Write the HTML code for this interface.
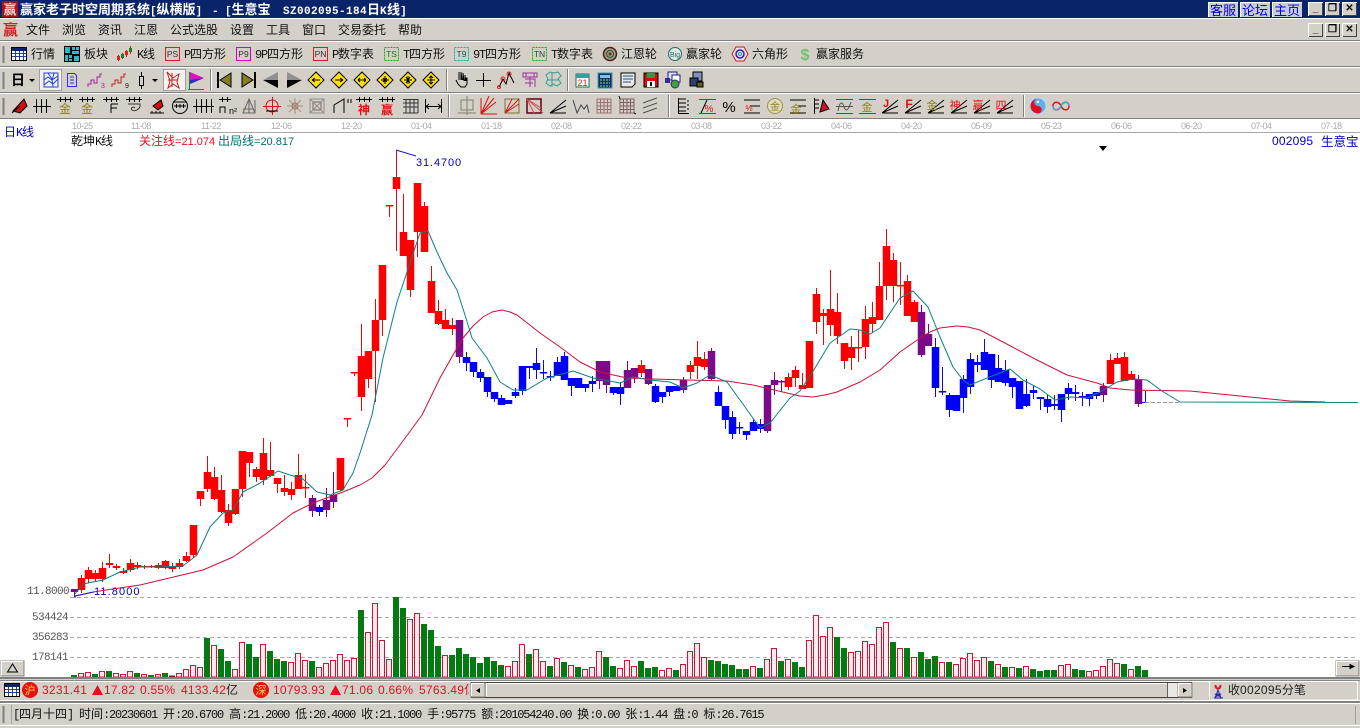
<!DOCTYPE html>
<html lang="zh"><head><meta charset="utf-8"><title>赢家老子时空周期系统</title>
<style>
html,body{margin:0;padding:0;width:1360px;height:728px;overflow:hidden;background:#d4d0c8}
body{position:relative;font:12px/14px "Noto Sans CJK SC","WenQuanYi Zen Hei",sans-serif;color:#111}
.a{position:absolute;white-space:pre}
i{font:normal 11px/14px "Liberation Mono",monospace;letter-spacing:-.6px}
.st i{font:normal 12px/14px "Liberation Mono",monospace;letter-spacing:-1.2px}
.l{position:absolute;left:0;width:1360px;height:1px}
.g{background:#808080}.w{background:#fff}
.tb{color:#fff;font:bold 13px/18px "Noto Sans CJK SC",sans-serif;top:0}
.tb i{font:bold 11px/18px "Liberation Mono",monospace;letter-spacing:-.1px}
.m{top:23px}.t1{top:47px}
.wb{position:absolute;width:15px;height:14px;background:#d4d0c8;box-shadow:inset 1px 1px #fff,inset -1px -1px #404040;font:bold 10px/14px "Liberation Sans",sans-serif;text-align:center;color:#000}
.lk{position:absolute;top:2px;height:15px;width:30px;background:#c8ccd8;color:#0000d0;font:13px/15px "Noto Sans CJK SC",sans-serif;text-align:center;box-shadow:inset 1px 1px #fff}
.d{top:120px;color:#aaa;font:9px/12px "Liberation Sans",sans-serif;letter-spacing:-.5px}
.s{top:683px;color:#e01020;font:12px/14px "Liberation Sans","Noto Sans CJK SC",sans-serif;letter-spacing:.25px}
.y{color:#555;font:11px/12px "Liberation Mono",monospace;letter-spacing:-.6px;width:60px;text-align:right;left:8px}
.n{font:11px "Liberation Sans",sans-serif}
svg{position:absolute;left:0;top:0}
</style></head><body>

<div class="a" style="left:0;top:0;width:1360px;height:18px;background:#0a246a"></div>
<div class="l w" style="top:18px"></div>
<div class="l g" style="top:40px"></div><div class="l w" style="top:41px"></div>
<div class="l g" style="top:66px"></div><div class="l w" style="top:67px"></div>
<div class="l g" style="top:92px"></div><div class="l w" style="top:93px"></div>
<div class="l g" style="top:118px"></div>

<!-- title -->
<div class="a" style="left:2px;top:1px;width:16px;height:16px;background:#a01818;color:#ffd0d0;font:bold 13px/16px 'Noto Sans CJK SC',sans-serif;text-align:center">赢</div>
<div class="a tb" style="left:20px">赢家老子时空周期系统<i>[</i>纵横版<i>]</i></div>
<div class="a tb" style="left:212px"><i>-</i></div>
<div class="a tb" style="left:225px"><i>[</i>生意宝</div>
<div class="a tb" style="left:283px"><i style="letter-spacing:.4px">SZ002095-184</i>日<i style="letter-spacing:.4px">K</i>线<i>]</i></div>
<div class="lk" style="left:1208px">客服</div><div class="lk" style="left:1240px">论坛</div><div class="lk" style="left:1272px">主页</div>
<div class="wb" style="left:1308px;top:2px">_</div><div class="wb" style="left:1325px;top:2px">❐</div><div class="wb" style="left:1342px;top:2px">✕</div>
<div class="wb" style="left:1308px;top:23px">_</div><div class="wb" style="left:1325px;top:23px">❐</div><div class="wb" style="left:1342px;top:23px">✕</div>

<!-- menu -->
<div class="a" style="left:3px;top:21px;color:#d02020;font:bold 15px/18px 'Noto Sans CJK SC',sans-serif">赢</div>
<div class="a m" style="left:26px">文件</div><div class="a m" style="left:62px">浏览</div><div class="a m" style="left:98px">资讯</div><div class="a m" style="left:134px">江恩</div><div class="a m" style="left:170px">公式选股</div><div class="a m" style="left:230px">设置</div><div class="a m" style="left:266px">工具</div><div class="a m" style="left:302px">窗口</div><div class="a m" style="left:338px">交易委托</div><div class="a m" style="left:398px">帮助</div>

<!-- toolbar1 text -->
<div class="a t1 st" style="left:31px">行情</div><div class="a t1 st" style="left:84px">板块</div><div class="a t1 st" style="left:137px"><i>K</i>线</div><div class="a t1 st" style="left:184px"><i>P</i>四方形</div><div class="a t1 st" style="left:255px"><i>9P</i>四方形</div><div class="a t1 st" style="left:332px"><i>P</i>数字表</div><div class="a t1 st" style="left:403px"><i>T</i>四方形</div><div class="a t1 st" style="left:473px"><i>9T</i>四方形</div><div class="a t1 st" style="left:551px"><i>T</i>数字表</div><div class="a t1" style="left:621px">江恩轮</div><div class="a t1" style="left:686px">赢家轮</div><div class="a t1" style="left:752px">六角形</div><div class="a t1" style="left:816px">赢家服务</div>

<!-- chart area -->
<div class="a" style="left:0;top:119px;width:1360px;height:558px;background:#fff"></div>
<div class="a" style="left:71px;top:132px;width:1289px;height:1px;background:#a8a8a8"></div>
<div class="a d" style="left:72px">10-25</div><div class="a d" style="left:131px">11-08</div><div class="a d" style="left:201px">11-22</div><div class="a d" style="left:271px">12-06</div><div class="a d" style="left:341px">12-20</div><div class="a d" style="left:411px">01-04</div><div class="a d" style="left:481px">01-18</div><div class="a d" style="left:551px">02-08</div><div class="a d" style="left:621px">02-22</div><div class="a d" style="left:691px">03-08</div><div class="a d" style="left:761px">03-22</div><div class="a d" style="left:831px">04-06</div><div class="a d" style="left:901px">04-20</div><div class="a d" style="left:971px">05-09</div><div class="a d" style="left:1041px">05-23</div><div class="a d" style="left:1111px">06-06</div><div class="a d" style="left:1181px">06-20</div><div class="a d" style="left:1251px">07-04</div><div class="a d" style="left:1321px">07-18</div>

<div class="a st" style="left:4px;top:125px;color:#0000c8">日<i>K</i>线</div>
<div class="a st" style="left:71px;top:134px">乾坤<i>K</i>线</div>
<div class="a" style="left:139px;top:134px;color:#e01020;font-size:12px">关注线<span class="n">=21.074</span></div>
<div class="a" style="left:218px;top:134px;color:#007070">出局线<span class="n">=20.817</span></div>
<div class="a" style="left:1272px;top:134px;color:#0000c8;font:12px/14px 'Liberation Sans';letter-spacing:.2px">002095</div>
<div class="a" style="left:1321px;top:134px;color:#0000c8;font-size:12.5px">生意宝</div>

<div class="a" style="left:416px;top:156px;color:#0000c8;font:11px/14px 'Liberation Sans';letter-spacing:.9px">31.4700</div>
<div class="a" style="left:94px;top:585px;color:#0000c8;font:11px/14px 'Liberation Sans';letter-spacing:1.1px">11.8000</div>
<div class="a y" style="top:586px;left:8px;text-align:right;width:61px">11.8000</div>
<div class="a y" style="top:612px">534424</div><div class="a y" style="top:632px">356283</div><div class="a y" style="top:652px">178141</div>

<svg width="1360" height="728" viewBox="0 0 1360 728">
<path d="M70 597.5H1358M70 617.5H1358M70 637.5H1358M70 657.5H1358" stroke="#a8a8a8" stroke-dasharray="4 3" fill="none"/>
<path d="M1099 146h8l-4 5z" fill="#000"/>
<!-- volume green -->
<path fill="none" stroke="#067a12" stroke-width="6" d="M74 675V677M95 674V677M109 671V677M137 673V677M151 675V677M165 673V677M207 638V677M221 649V677M228 661V677M249 644V677M256 657V677M270 651V677M277 659V677M284 661V677M312 661V677M361 610V677M396 597V677M403 608V677M424 624V677M431 630V677M438 646V677M452 655V677M459 648V677M466 654V677M473 657V677M480 663V677M487 657V677M494 661V677M501 665V677M529 654V677M550 666V677M564 662V677M578 667V677M606 657V677M613 666V677M641 661V677M648 668V677M655 667V677M676 670V677M711 660V677M718 661V677M725 664V677M732 665V677M739 669V677M746 669V677M760 668V677M781 661V677M795 662V677M802 667V677M837 637V677M844 648V677M893 642V677M907 648V677M921 652V677M928 659V677M935 656V677M949 662V677M991 661V677M1005 667V677M1019 668V677M1033 669V677M1040 671V677M1047 670V677M1054 670V677M1075 669V677M1082 670V677M1124 664V677M1138 666V677M1145 670V677"/>
<!-- volume red -->
<path fill="#ffeaee" stroke="#cc1636" d="M78.5 673.5h5V677h-5zM85.5 672.5h5V677h-5zM99.5 671.5h5V677h-5zM113.5 673.5h5V677h-5zM120.5 674.5h5V677h-5zM127.5 671.5h5V677h-5zM141.5 674.5h5V677h-5zM155.5 674.5h5V677h-5zM176.5 673.5h5V677h-5zM183.5 669.5h5V677h-5zM190.5 665.5h5V677h-5zM197.5 667.5h5V677h-5zM211.5 645.5h5V677h-5zM232.5 669.5h5V677h-5zM239.5 642.5h5V677h-5zM260.5 644.5h5V677h-5zM288.5 662.5h5V677h-5zM295.5 653.5h5V677h-5zM302.5 660.5h5V677h-5zM316.5 667.5h5V677h-5zM323.5 663.5h5V677h-5zM330.5 660.5h5V677h-5zM337.5 654.5h5V677h-5zM344.5 660.5h5V677h-5zM351.5 658.5h5V677h-5zM365.5 632.5h5V677h-5zM372.5 603.5h5V677h-5zM379.5 640.5h5V677h-5zM386.5 659.5h5V677h-5zM407.5 619.5h5V677h-5zM414.5 613.5h5V677h-5zM442.5 655.5h5V677h-5zM505.5 666.5h5V677h-5zM512.5 661.5h5V677h-5zM519.5 644.5h5V677h-5zM533.5 649.5h5V677h-5zM540.5 661.5h5V677h-5zM554.5 658.5h5V677h-5zM568.5 665.5h5V677h-5zM582.5 669.5h5V677h-5zM589.5 667.5h5V677h-5zM596.5 651.5h5V677h-5zM617.5 668.5h5V677h-5zM624.5 660.5h5V677h-5zM631.5 666.5h5V677h-5zM659.5 670.5h5V677h-5zM666.5 668.5h5V677h-5zM680.5 664.5h5V677h-5zM687.5 651.5h5V677h-5zM694.5 643.5h5V677h-5zM701.5 657.5h5V677h-5zM750.5 666.5h5V677h-5zM764.5 659.5h5V677h-5zM771.5 648.5h5V677h-5zM785.5 659.5h5V677h-5zM806.5 640.5h5V677h-5zM813.5 615.5h5V677h-5zM820.5 636.5h5V677h-5zM827.5 627.5h5V677h-5zM848.5 652.5h5V677h-5zM855.5 651.5h5V677h-5zM862.5 641.5h5V677h-5zM869.5 644.5h5V677h-5zM876.5 627.5h5V677h-5zM883.5 622.5h5V677h-5zM897.5 648.5h5V677h-5zM911.5 657.5h5V677h-5zM939.5 662.5h5V677h-5zM953.5 664.5h5V677h-5zM960.5 658.5h5V677h-5zM967.5 653.5h5V677h-5zM974.5 660.5h5V677h-5zM981.5 657.5h5V677h-5zM995.5 664.5h5V677h-5zM1009.5 667.5h5V677h-5zM1023.5 666.5h5V677h-5zM1058.5 665.5h5V677h-5zM1065.5 664.5h5V677h-5zM1086.5 671.5h5V677h-5zM1093.5 670.5h5V677h-5zM1100.5 666.5h5V677h-5zM1107.5 659.5h5V677h-5zM1114.5 663.5h5V677h-5zM1128.5 669.5h5V677h-5z"/>
<path stroke="#a00020" stroke-width="6" d="M172 675.5V677"/>

<g transform="translate(.5 0)" fill="none">
<!-- wicks -->
<path stroke="#e80808" d="M81 575V593M88 567V583M95 570V582M102 562V582M109 554V568M116 564V570M123 568V574M130 559V572M137 562V569M144 565V569M151 565V568M158 563V569M165 560V569M172 563V572M179 559V569M186 552V562M193 525V558M200 491V506M207 456V492M214 467V500M221 475V513M228 504V526M235 489V515M242 451V497M249 452V477M256 467V482M263 438V485M270 442V477M277 478V493M284 475V496M291 482V500M298 454V489M305 474V498M340 458V491M347 418V427M354 372V376M361 324V411M368 351V388M375 299V402M382 265V336M389 205V217M396 150V251M403 194V256M410 240V297M417 183V257M424 202V252M431 266V313M438 300V325M445 309V329M452 318V335M641 360V377M690 361V379M697 341V379M704 352V370M788 373V390M795 366V387M802 373V389M809 341V388M816 288V334M823 309V345M830 270V336M837 293V344M844 343V369M851 336V370M858 330V362M865 306V359M872 302V333M879 262V320M886 229V300M893 253V302M900 262V305M907 275V316M914 300V322M1110 354V384M1117 353V364M1124 352V381M1131 371V380"/>
<path stroke="#800080" d="M74 589V597M312 495V517M326 488V517M333 472V508M459 320V363M599 361V389M606 361V393M627 361V388M634 368V383M648 369V385M683 377V393M711 348V380M767 385V433M774 372V395M781 380V392M921 305V357M928 324V346M1103 383V402M1138 375V407"/>
<path stroke="#0808f0" d="M319 505V516M466 352V371M473 362V377M480 369V382M487 377V397M494 392V402M501 395V405M515 388V398M522 366V395M529 366V379M536 348V379M543 360V379M550 371V381M557 357V376M564 352V380M571 378V396M585 384V392M592 376V392M613 387V395M620 382V405M655 384V403M662 392V403M669 386V396M718 386V406M725 406V429M732 411V439M739 422V434M746 431V440M753 419V431M760 419V433M935 338V397M942 367V395M949 393V417M963 375V413M970 353V394M977 355V372M984 339V370M991 354V388M998 355V382M1005 360V386M1012 378V398M1026 379V407M1033 385V399M1040 397V410M1047 395V413M1054 395V410M1061 394V422M1068 383V400M1075 385V401M1082 392V406M1089 394V406M1096 392V399M1145 391V403"/>
<!-- bodies -->
<path stroke="#fa0000" stroke-width="7.5" d="M81 578V590M88 570V579M95 573V579M102 568V579M109 563V565M116 566V568M123 571V573M130 563V570M137 565V567M144 566V567.5M151 566V567.5M158 565V568M165 561V568M172 566V569M179 563V567M186 556V561M193 525V555M200 491V499M207 472V489M214 477V499M221 490V512M228 510V523M235 489V514M242 451V489M249 452V463M256 469V477M263 453V480M270 470V476M277 478V484M284 488V492M291 489V495M298 475V489M305 487V488.5M340 458V490M347 418V419.5M354 372V373.5M361 356V397M368 351V379M375 320V351M382 265V320M389 205V206.5M396 177V189M403 232V256M410 240V290M417 183V232M424 206V252M431 281V313M438 311V324M445 320V329M452 325V329M641 365V373M690 365V372M697 357V366M704 359V367M788 377V387M795 370V378M802 385V389M809 341V388M816 294V322M823 313V316M830 309V325M837 312V336M844 343V361M851 347V358M858 347V348.5M865 319V347M872 317V324M879 286V320M886 246V286M893 260V286M900 285V286.5M907 281V316M914 302V322M1110 360V384M1117 358V364M1124 357V381M1131 374V380"/>
<path stroke="#7a0a8a" stroke-width="7.5" d="M74 589V592M312 498V511M326 500V510M333 495V502M459 320V357M599 361V381M606 361V385M627 370V388M634 368V378M648 369V384M683 380V390M711 351V379M767 385V431M774 380V385M781 381V382.5M921 312V355M928 334V346M1103 386V395M1138 379V404"/>
<path stroke="#0000f8" stroke-width="7.5" d="M319 507V512M466 357V363M473 362V372M480 372V378M487 377V392M494 392V399M501 398V405M508 400V404M515 392V396M522 366V391M529 366V368M536 363V370M543 372V373.5M550 376V377.5M557 362V376M564 356V380M571 378V386M578 378V388M585 384V388M592 381V384M613 387V393M620 387V394M655 386V402M662 392V397M669 386V392M676 386V391M718 392V406M725 406V420M732 417V434M739 427V428.5M746 431V435M753 422V431M760 424V429M935 347V388M942 391V392.5M949 395V410M956 395V411M963 379V398M970 359V387M977 362V365M984 352V370M991 354V380M998 368V382M1005 370V383M1012 378V387M1019 381V409M1026 394V406M1033 390V393M1040 397V399M1047 399V407M1054 404V406M1061 394V410M1068 388V394M1075 392V394M1082 396V397.5M1089 394V399M1096 392V396M1145 402V403"/>
</g>
<!-- MA lines -->
<path d="M1145 402.5H1180" stroke="#999" stroke-dasharray="4 2"/>
<polyline fill="none" stroke="#cc1038" stroke-linejoin="round" points="75,596 93,592 140,585 203,570 233,557 267,533 293,513 313,503 343,492 360,485 372,478 385,465 400,445 422,415 440,378 453,355 463,338 473,326 483,317 492,312 502,310 510,312 517,315 540,333 560,347 580,362 600,372 627,378 653,379 687,380 727,381 753,385 787,393 800,396 813,397 825,395 837,392 860,382 880,370 900,352 920,338 930,332 940,328 948,327 957,326 968,327 980,330 1003,342 1037,360 1067,375 1097,383 1110,388 1130,390 1190,391 1240,396 1290,401 1325,402"/>
<polyline fill="none" stroke="#0c8080" stroke-linejoin="round" points="75,594 83,584 103,580 120,572 140,567 160,567 183,566 197,555 210,527 223,513 233,510 243,492 260,483 278,471 290,475 303,479 317,492 330,495 343,490 353,473 360,453 372,415 383,358 397,302 406,275 420,233 428,231 437,252 447,273 457,290 465,315 472,338 487,358 500,382 513,390 527,390 547,378 573,371 593,378 620,383 633,377 650,380 670,382 683,388 697,383 710,375 727,382 740,400 760,428 770,423 790,398 800,391 812,373 830,343 850,329 860,330 870,334 880,328 900,298 913,291 928,307 940,337 953,367 963,380 970,385 987,378 1010,369 1023,380 1040,389 1055,400 1070,397 1087,398 1100,392 1117,382 1133,379 1147,380 1162,391 1180,402 1358,402.5"/>
<path d="M396 150L416 156M75 596L94 592M75 596V598" fill="none" stroke="#1818c8"/>

<!-- TOOLBAR 1 ICONS -->
<g fill="none">
<path d="M3.5 46V63" stroke="#808080" stroke-width="2"/><path d="M3.5 72V89M3.5 98V115" stroke="#808080" stroke-width="2"/>
<rect x="11.5" y="47.5" width="15" height="13" fill="#fff" stroke="#000"/><rect x="12" y="48" width="14" height="3" fill="#0a246a"/><path d="M12 53.5H26M12 56.5H26M15.5 51V60M19.5 51V60M23.5 51V60" stroke="#2040a0"/>
<rect x="64" y="46" width="16" height="16" fill="#000"/><path d="M65 47h5v6h-5zM72 47h3v3h-3zM76 47h3v3h-3zM72 51h7v3h-7zM65 55h3v6h-3zM69 55h3v3h-3zM74 56h5v5h-5zM69 59h3v2h-3z" fill="#20c0c8"/>
<path d="M118.5 55V61M122.5 53V59M126.5 50V57M130.5 46V54" stroke="#c02020"/><path d="M117 56h3v4h-3zM125 51h3v4h-3z" fill="#e02020"/><path d="M121 54h3v4h-3zM129 48h3v4h-3z" fill="#208020"/>
<rect x="165.5" y="47.5" width="14" height="13" stroke="#d02020"/>
<rect x="236.5" y="47.5" width="14" height="13" stroke="#d000c0"/>
<rect x="313.5" y="47.5" width="14" height="13" stroke="#d02020"/>
<rect x="384.5" y="47.5" width="14" height="13" stroke="#10b020" stroke-dasharray="2 1"/>
<rect x="454.5" y="47.5" width="14" height="13" stroke="#10b0b0" stroke-dasharray="2 1"/>
<rect x="532.5" y="47.5" width="14" height="13" stroke="#10b020" stroke-dasharray="2 1"/>
<g font-family="Liberation Sans" font-size="8.5" fill="#333" text-anchor="middle">
<text x="172.5" y="57">PS</text>
<text x="243.5" y="57">P9</text>
<text x="320.5" y="57">PN</text>
<text x="391.5" y="57" fill="#207020">TS</text>
<text x="461.5" y="57" fill="#105060">T9</text>
<text x="539.5" y="57" fill="#205030">TN</text>
</g>
<circle cx="610" cy="54" r="6.5" fill="#a09880" stroke="#502020" stroke-width="1.5"/><circle cx="610" cy="54" r="3.5" stroke="#206030"/><circle cx="610" cy="54" r="1.5" fill="#603030"/>
<circle cx="675" cy="54" r="6.5" fill="#dfe8e0" stroke="#207070"/><text x="675" y="57" font-family="Liberation Sans" font-size="7" fill="#207070" text-anchor="middle">Big</text>
<path d="M736 47h8l4 7-4 7h-8l-4-7z" fill="#f0e0e0" stroke="#c02030"/><circle cx="740" cy="54" r="4" stroke="#2020c0" stroke-width="1.5"/><circle cx="740" cy="54" r="1.5" stroke="#20a0a0"/>
<text x="805" y="60" font-family="Liberation Sans" font-weight="bold" font-size="16" fill="#70c070" text-anchor="middle">$</text>

<!-- TOOLBAR 2 -->
<text x="11" y="85" font-family="Noto Sans CJK SC" font-weight="bold" font-size="14" fill="#000">日</text>
<path d="M29 79h6l-3 3zM152 79h6l-3 3z" fill="#000"/>
<rect x="39.5" y="69.5" width="22" height="21" fill="#f4f2ee" stroke="#a0a0a0"/><rect x="163.5" y="69.5" width="22" height="21" fill="#f4f2ee" stroke="#a0a0a0"/>
<path d="M44 73h14v14H44zM44 80l4-3 4 3 6-4M44 85l5-4 4 3 5-5M48 73l4 6 1 8M54 73l-2 8" stroke="#2040e0"/>
<path d="M67.5 73.5h7l2 2v11h-9zM70 77h4M70 80h4M70 83h4" stroke="#3030f0"/>
<path d="M88 87v-3h3v-4h3v3h3v-6h3v-3h2" stroke="#a020a0"/><text x="101" y="88" font-size="7" fill="#a020a0" font-family="Liberation Sans">3</text>
<path d="M112 87v-3h3v-4h3v3h3v-6h3v-3h2" stroke="#c02020"/><text x="125" y="88" font-size="7" fill="#202020" font-family="Liberation Sans">9</text>
<path d="M141.5 72V76M141.5 85V89M139.5 76.5h4v9h-4z" stroke="#000"/>
<path d="M167 72l6 6 6-4-2 8 2 6-6-4-5 4 2-7zM168 80h10M172 73v14" stroke="#c02020"/>
<path d="M189.5 72V90M188 89.5h16" stroke="#208040"/><path d="M190 72l14 6-14 6z" fill="#e010c0"/><path d="M190 80l14-2-14 6z" fill="#3030c0"/>
<path d="M210.5 69V91" stroke="#808080"/><path d="M211.5 69V91" stroke="#fff"/>
<path d="M217.5 72V88M218.5 72V88" stroke="#000"/><path d="M220 80l11-7v14z" fill="#808020" stroke="#000"/>
<path d="M254.5 72V88M255.5 72V88" stroke="#000"/><path d="M253 80l-11-7v14z" fill="#808020" stroke="#000"/>
<path d="M263 80l15-8v8z" fill="#909090"/><path d="M263 80h15v8z" fill="#000"/>
<path d="M302 80l-15-8v8z" fill="#909090"/><path d="M302 80h-15v8z" fill="#000"/>
<g stroke="#000"><path fill="#ffe010" d="M316 72l8 8-8 8-8-8zM339 72l8 8-8 8-8-8zM362 72l8 8-8 8-8-8zM385 72l8 8-8 8-8-8zM408 72l8 8-8 8-8-8zM431 72l8 8-8 8-8-8z"/>
<path d="M312 80h8M312 80l3-2M312 80l3 2M335 80h8M343 80l-3-2M343 80l-3 2M358 80h8M358 80l2-2M358 80l2 2M366 80l-2-2M366 80l-2 2M381 80h8M385 76v8M383 78l4 4M387 78l-4 4M404 80h8M408 76v8M406 77l4 6M410 77l-4 6M427 80h8M431 76v8M429 78l2-2 2 2M429 82l2 2 2-2"/></g>
<path d="M446.5 69V91" stroke="#808080"/><path d="M447.5 69V91" stroke="#fff"/>
<path d="M456 80l2 4 3 3h4l2-3v-6l-1 0v3M459 80v-8M461 80v-8l1 8M463 80v-7l1 8M465 81v-6" stroke="#000"/>
<path d="M483.5 73V87M476 80.5H491" stroke="#000"/>
<path d="M499 87l4-8 3 5 3-11 5 10" stroke="#000"/><circle cx="503" cy="79" r="2" stroke="#e02020"/><circle cx="509" cy="74" r="2" stroke="#e02020"/><circle cx="499" cy="87" r="1.5" stroke="#e02020"/>
<path d="M523 73h14v4h-14zM526 73v4M534 73v4M525 79h10v8M530 77v10M525 83h8" stroke="#a030a0"/>
<path d="M546 75l4-3 4 1 4-1 3 4-3 3 3 4-4 3-4-2-3 2-4-3 2-4zM548 80h10M552 73v14" stroke="#30a090"/>
<path d="M567.5 69V91" stroke="#808080"/><path d="M568.5 69V91" stroke="#fff"/>
<rect x="576" y="74" width="13" height="13" fill="#fff" stroke="#406060"/><rect x="576" y="74" width="13" height="4" fill="#30a0a0"/><text x="582.5" y="86" font-family="Liberation Sans" font-size="9" fill="#d02020" text-anchor="middle">21</text>
<rect x="598" y="73" width="14" height="15" fill="#103060" stroke="#30a0c0"/><rect x="600" y="75" width="10" height="3" fill="#80c0e0"/><path d="M600 80h10M600 83h10M600 86h10" stroke="#80e0a0" stroke-dasharray="2 1"/>
<path d="M621 73h14v11l-3 3h-11z" fill="#e8e8e8" stroke="#000"/><path d="M623 76h10M623 79h10M623 82h8" stroke="#205080"/>
<rect x="644" y="73" width="14" height="14" fill="#d01010" stroke="#000"/><rect x="647" y="73" width="8" height="5" fill="#20a040"/><rect x="647" y="81" width="8" height="6" fill="#fff"/><rect x="650" y="82" width="2" height="4" fill="#000"/>
<rect x="668" y="72" width="9" height="8" fill="#e0e0f0" stroke="#202080"/><rect x="672" y="75" width="8" height="7" fill="#fff" stroke="#202080"/><circle cx="675" cy="84" r="4" fill="#40a040" stroke="#303060"/><rect x="665" y="78" width="5" height="5" fill="#303090"/>
<rect x="693" y="72" width="9" height="9" fill="#8090c0" stroke="#000"/><rect x="690" y="78" width="8" height="8" fill="#304070" stroke="#000"/><rect x="697" y="82" width="6" height="5" fill="#606020" stroke="#000"/>

<!-- TOOLBAR 3 -->
<g stroke="#000">
<path d="M12 113l8-7M24 99l3 7-7 7-7-2z" fill="#d01010"/>
<path d="M36.5 99V113M41.5 99V113M46.5 99V113M33 106.5H51"/>
<path d="M57 99.5H73M60.5 97V102M65.5 97V102M70.5 97V102M79 99.5H95M82.5 97V102M87.5 97V102M92.5 97V102"/>
<path d="M103 99.5H119M106.5 97V102M111.5 97V102M116.5 97V102M111 104h7M111 104v9M111 108h6"/>
<path d="M126 99.5H142M129.5 97V102M134.5 97V102M139.5 97V102"/><path d="M128 104h12c1 5-5 8-8 6-2-2 1-4 3-2" fill="none" stroke="#333"/>
<path d="M150 113h14M152 113v-2M156 113v-2M160 113v-2"/><path d="M153 106l8-6 2 6-5 4z" fill="#d01010"/>
<circle cx="180" cy="106" r="7.5"/><path d="M174 106H186M176.5 104V108M180 104V108M183.5 104V108M173 102h14"/>
<path d="M196.5 99V113M201.5 99V113M206.5 99V113M211.5 99V113M193 106.5H214"/>
<path d="M219 99.5H231M222.5 97V102M227.5 97V102M220 113v-6h5v6"/>
<path d="M243 113l6-14 6 14zM249 99v14M243 109h10M255 100v13" stroke="#666"/>
<circle cx="272" cy="106" r="6" stroke="#e01010"/><path d="M263 106.5H281M272.5 97V115" stroke="#e01010"/><path d="M266 111H278" />
<circle cx="295" cy="106" r="3" stroke="#c05050"/><path d="M287 106H303M295 98V114M289 100l12 12M301 100l-12 12" stroke="#a09080"/>
<rect x="310" y="99" width="14" height="14" stroke="#909090"/><rect x="313" y="102" width="8" height="8" stroke="#806060"/><path d="M310 99l14 14M324 99l-14 14" stroke="#909090"/>
<path d="M334 113V105L344 99V113M348 99v4M351 99v4"/>
<path d="M356 99.5H372M359.5 97V102M364.5 97V102M369.5 97V102"/><path d="M379 99.5H395M382.5 97V102M387.5 97V102M392.5 97V102"/>
<path d="M403 99.5H418V113M406 99.5V113M410 99.5V113M414 99.5V113M403 103H418M403 107H418M403 113H418" stroke="#333"/>
<path d="M425.5 99V113M441.5 99V113M426 106.5H441M426 106.5l3-2.5M426 106.5l3 2.5M441 106.5l-3-2.5M441 106.5l-3 2.5"/>
<path d="M448.5 95V117" stroke="#808080"/><path d="M449.5 95V117" stroke="#fff"/>
<path d="M461 100h12v10H461zM467 96V115M458 113h18" stroke="#808070"/>
<path d="M481 114L496 102M481 114L494 98M481 114L489 96M481 114H497M481 114V98" stroke="#e01010"/>
<rect x="505" y="99" width="14" height="14" stroke="#807030"/><path d="M505 113L519 104M505 113L519 99M505 113L512 99" stroke="#d02020"/>
<rect x="527" y="99" width="14" height="14" stroke="#600010" stroke-width="1.5"/><path d="M527 99L543 113M527 99L541 108M527 99L534 113" stroke="#d05050"/>
<path d="M550 113L566 100M550 113H566M550 113L566 106"/>
<path d="M573 100l4 13 4-8 3 4 3-4 2 8" stroke="#445"/>
<path d="M597 99h14v14h-14zM600.5 99v14M604 99v14M607.5 99v14M597 102.5h14M597 106h14M597 109.5h14" stroke="#a07070"/>
<path d="M620 99h14v14h-14zM623.5 99v14M627 99v14M630.5 99v14M620 102.5h14M620 106h14M620 109.5h14" stroke="#806060"/><path d="M620 99l-1-3M634 113l2 1" />
<path d="M643 103L657 98M643 108L657 103M643 113L657 108" stroke="#555"/>
<path d="M668.5 95V117" stroke="#808080"/><path d="M669.5 95V117" stroke="#fff"/>
<path d="M678.5 98V114M678 99H686M678 103H686M678 107H686M678 111H686M678 113.5H689M688 100v2M688 104v2M688 108v2"/>
<path d="M699 99.5H716M699 113.5H716" stroke="#e01010"/><path d="M701 113L707 100" />
<text x="709" y="112" font-size="10" font-family="Liberation Sans" fill="#e01010" stroke="none" text-anchor="middle">%</text>
<text x="729" y="112" font-size="15" font-family="Liberation Sans" fill="#000" stroke="none" text-anchor="middle">%</text>
<path d="M744 100H760M750 106H760M744 113H760"/><text x="749" y="111" font-size="8" font-family="Liberation Sans" fill="#e01010" stroke="none" text-anchor="middle">%</text>
<circle cx="775" cy="106" r="7.5" stroke="#a09050" fill="#e0dcc0"/>
<path d="M790 100H806M798 106H806M790 113H806"/>
<path d="M814.5 98V114M814 100H819M814 104H819M814 108H819"/><path d="M820 112l3-12 6 9z" fill="#d01030"/>
<path d="M836 99.5H853M836 113.5H853" stroke="#e01010"/><path d="M836 106.5H853" stroke="#555"/><path d="M838 111c2-12 5-8 6-4 2 5 4 4 7-5" stroke="#555"/>
<path d="M859 99.5H876M859 113.5H876" stroke="#e01010"/>
<path d="M882 113L898 100M882 113L898 106M882 113H898"/>
<path d="M905 113L921 100M905 113L921 106M905 113H921M928 113L944 100M928 113L944 106M928 113H944M951 113L967 100M951 113L967 106M951 113H967M974 113L990 100M974 113L990 106M974 113H990M997 113L1013 100M997 113L1013 106M997 113H1013"/>
</g>
<g font-family="Noto Sans CJK SC" text-anchor="middle">
<text x="65" y="113" font-size="12" fill="#908020">金</text><text x="87" y="113" font-size="12" fill="#908020">金</text>
<text x="364" y="114" font-size="12" fill="#e01010" font-weight="bold">神</text><text x="387" y="114" font-size="12" fill="#e01010" font-weight="bold">赢</text>
<text x="233" y="114" font-size="9" fill="#000" font-family="Liberation Sans">n²</text>
<text x="775" y="110" font-size="10" fill="#908020">金</text><text x="796" y="113" font-size="11" fill="#908020">金</text><text x="867" y="111" font-size="11" fill="#908020">金</text>
<text x="886" y="107" font-size="11" fill="#e01010" font-family="Liberation Sans" font-weight="bold">J</text><text x="909" y="108" font-size="12" fill="#e01010" font-family="Liberation Sans" font-weight="bold">F</text>
<text x="932" y="109" font-size="11" fill="#908020">金</text><text x="955" y="109" font-size="11" fill="#e01010">神</text><text x="978" y="109" font-size="11" fill="#e01010">赢</text><text x="1001" y="109" font-size="11" fill="#e01010">四</text>
</g>
<path d="M1023.5 95V117" stroke="#808080"/><path d="M1024.5 95V117" stroke="#fff"/>
<rect x="1030" y="98" width="16" height="16" fill="#b8d8f0"/><circle cx="1038" cy="106" r="7.5" fill="#60b0e8"/><path d="M1038 98.5a7.5 7.5 0 0 0 0 15a3.75 3.75 0 0 0 0-7.5a3.75 3.75 0 0 1 0-7.5z" fill="#e01020"/><circle cx="1038" cy="102" r="1.2" fill="#fff"/>
<path d="M1053 106c0-5 6-5 8 0s8 5 8 0-6-5-8 0-8 5-8 0" stroke="#e01020" stroke-width="1.5"/><path d="M1053 106c0 5 6 5 8 0M1061 106c2-5 8-5 8 0" stroke="#50a0d0" stroke-width="1.5"/>

<!-- status decorations -->
<path d="M0 677.5H1360M0 678.5H1360" stroke="#808080"/>
<path d="M0 680.5H1360" stroke="#8a8a8a"/><path d="M1 681.5H1358" stroke="#fff"/>
<path d="M0 700.5H1360" stroke="#fff"/><path d="M0 701.5H1360M0 702.5H1360" stroke="#808080"/><path d="M0 703.5H1360" stroke="#fff"/>
<path d="M0 725.5H1360" stroke="#fff"/><path d="M3.5 706V723" stroke="#808080" stroke-width="2"/><path d="M11.5 705V724M1355.5 706V724" stroke="#a0a0a0"/>
<rect x="4.5" y="683.5" width="15" height="13" fill="#fff" stroke="#000"/><rect x="5" y="684" width="14" height="3" fill="#0a246a"/><path d="M5 689.5H19M5 692.5H19M8.5 687V696M12.5 687V696M16.5 687V696" stroke="#2040a0"/>
<circle cx="30" cy="690" r="8" fill="#e81010"/><circle cx="261" cy="690" r="8" fill="#e81010"/>
<path d="M92 695l5.5-10 5.5 10zM330 695l5.5-10 5.5 10z" fill="#e01020"/>
<!-- buttons -->
<rect x="1" y="661" width="23" height="15" fill="#d4d0c8" stroke="#808080"/><path d="M7.5 672l5-8 5 8z" stroke="#000"/><path d="M1.5 675.5V661.5H23" stroke="#fff"/>
<rect x="1336" y="661" width="23" height="15" fill="#d4d0c8" stroke="#808080"/><path d="M1342 666.5H1354M1354 666.5l-4-2v4z" stroke="#000" fill="#000"/><path d="M1336.5 675.5V661.5H1358" stroke="#fff"/>
<!-- scrollbar -->
<path d="M471 682.5H1192M471 697.5H1192" stroke="#404040"/>
<rect x="471" y="683" width="14" height="14" fill="#d4d0c8" stroke="#808080"/><path d="M480 688v5l-4-2.5z" fill="#000"/><path d="M471.5 696V683.5H484" stroke="#fff"/>
<rect x="486" y="683" width="682" height="14" fill="#d4d0c8"/><path d="M486.5 696V683.5H1167" stroke="#fff"/><path d="M1167.5 683V697" stroke="#606060"/>
<rect x="1168" y="683" width="10" height="14" fill="#eae8e4"/>
<rect x="1178" y="683" width="14" height="14" fill="#d4d0c8" stroke="#808080"/><path d="M1183 688v5l4-2.5z" fill="#000"/><path d="M1178.5 696V683.5H1191" stroke="#fff"/>
<rect x="1209.5" y="681.5" width="148" height="18.5" fill="#d4d0c8" stroke="#fff"/>
<path d="M1218 689v2M1214 698h9M1218 690l-3 8M1218 690l3 8M1216 694h4M1215 697l6-3M1221 697l-6-3" stroke="#2020b0"/><path d="M1215 685c0 3 1 4 3 4s3-1 3-4M1216 685c0 2 1 3 2 3s2-1 2-3" stroke="#e01020"/>
</g>
</svg>

<div class="a" style="left:24px;top:683px;width:12px;text-align:center;color:#ffe040;font-size:11px">沪</div>
<div class="a" style="left:255px;top:683px;width:12px;text-align:center;color:#ffe040;font-size:11px">深</div>
<div class="a s" style="left:42px">3231.41</div><div class="a s" style="left:104px">17.82</div><div class="a s" style="left:140px">0.55%</div><div class="a s" style="left:181px">4133.42</div><div class="a" style="left:226px;top:683px;color:#222">亿</div>
<div class="a s" style="left:273px">10793.93</div><div class="a s" style="left:342px">71.06</div><div class="a s" style="left:378px">0.66%</div>
<div class="a s" style="left:419px;width:50px;overflow:hidden">5763.49亿</div>
<div class="a" style="left:1228px;top:683px;color:#222">收<span style="font:12px 'Liberation Sans';letter-spacing:.3px">002095</span>分笔</div>
<div class="a st" style="left:13px;top:707px;color:#111"><i>[</i>四月十四<i>]</i></div>
<div class="a st" style="left:79px;top:707px">时间<i>:20230601 </i>开<i>:20.6700 </i>高<i>:21.2000 </i>低<i>:20.4000 </i>收<i>:21.1000 </i>手<i>:95775 </i>额<i>:201054240.00 </i>换<i>:0.00 </i>张<i>:1.44 </i>盘<i>:0 </i>标<i>:26.7615</i></div>
</body></html>
